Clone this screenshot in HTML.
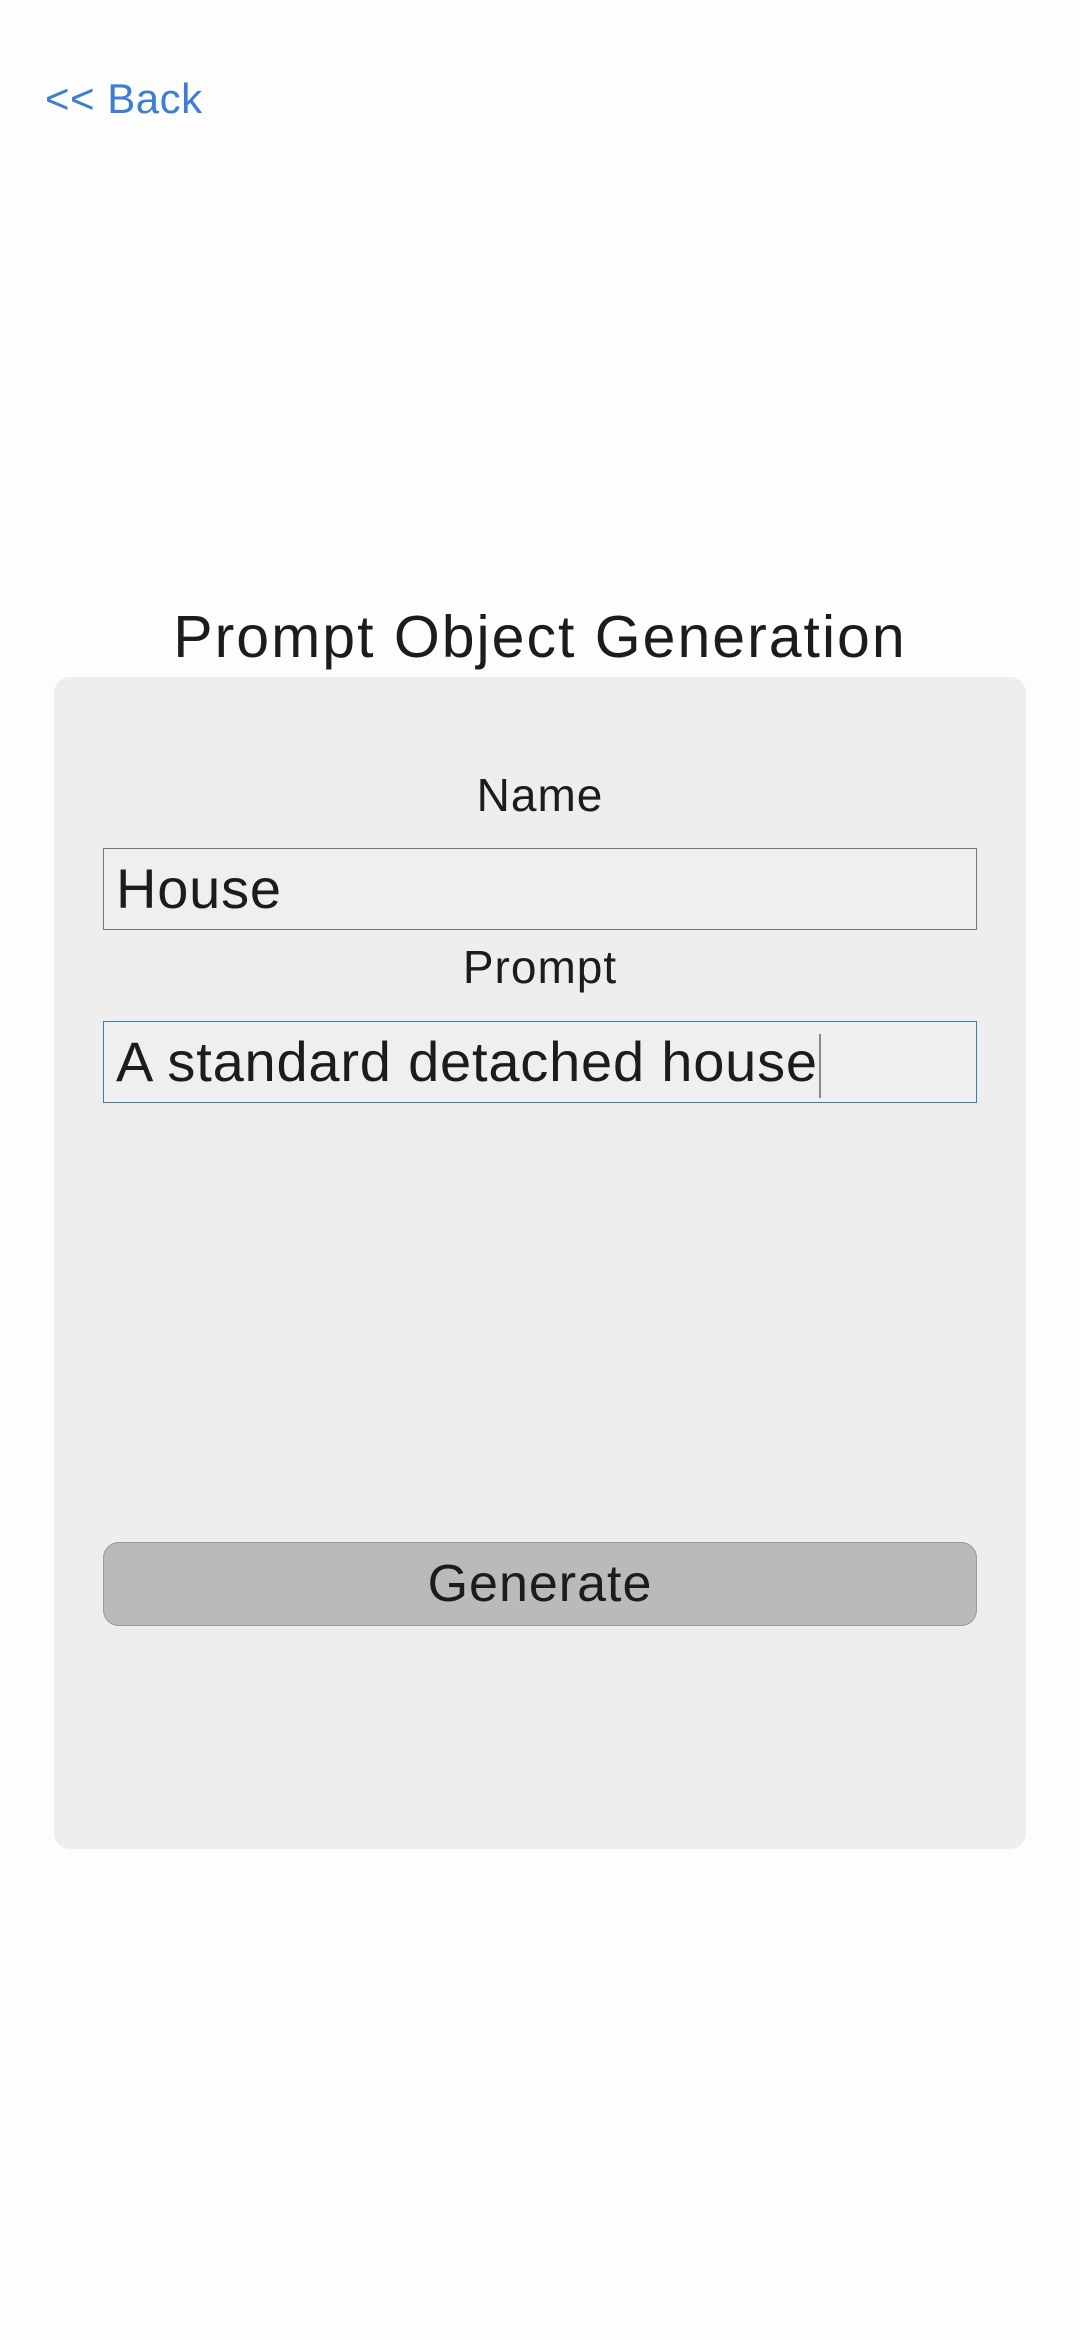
<!DOCTYPE html>
<html><head><meta charset="utf-8"><style>
html,body{margin:0;padding:0;}
body{width:1080px;height:2340px;background:#fdfdfd;font-family:"Liberation Sans",sans-serif;color:#1c1c1c;position:relative;overflow:hidden;}
.back{position:absolute;left:45px;top:75px;font-size:42px;color:#3b7fd4;letter-spacing:0.5px;}
.title{position:absolute;left:0;width:1080px;top:603px;text-align:center;font-size:59px;letter-spacing:2px;}
.panel{position:absolute;left:54px;top:677px;width:972px;height:1172px;background:#eeeeee;border-radius:16px;}
.lbl{position:absolute;left:0;width:1080px;text-align:center;font-size:46px;letter-spacing:1px;}
.inp{position:absolute;left:103px;width:874px;height:82px;border:1.5px solid #777;box-sizing:border-box;background:#efefef;font-size:56px;line-height:80px;padding-left:12px;letter-spacing:0.8px;}
.inp2{border-color:#3a7fa0;}
.caret{display:inline-block;width:2px;height:64px;background:#888;vertical-align:middle;margin-left:1px;}
.btn{position:absolute;left:103px;top:1542px;width:874px;height:84px;box-sizing:border-box;background:#bababa;border:1.5px solid #999;border-radius:16px;text-align:center;font-size:52px;line-height:82px;letter-spacing:1px;}
</style></head><body>
<div class="back">&lt;&lt; Back</div>
<div class="title">Prompt Object Generation</div>
<div class="panel"></div>
<div class="lbl" style="top:768px">Name</div>
<div class="inp" style="top:848px">House</div>
<div class="lbl" style="top:940px">Prompt</div>
<div class="inp inp2" style="top:1021px">A standard detached house<span class="caret"></span></div>
<div class="btn">Generate</div>
</body></html>
